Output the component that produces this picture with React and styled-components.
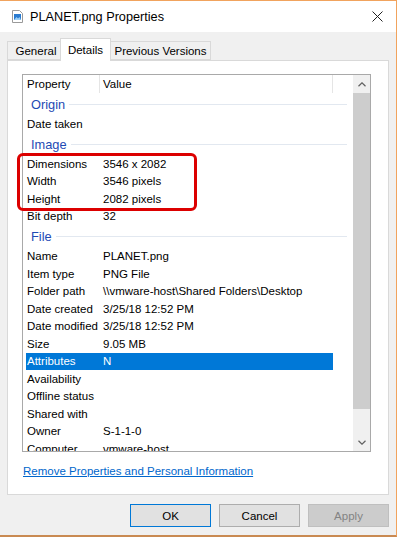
import React from "react";
import styled, { createGlobalStyle } from "styled-components";

const GlobalStyle = createGlobalStyle`
  body {
    margin: 0;
    background: #fff;
    font-family: "Segoe UI", "Liberation Sans", Arial, sans-serif;
  }
`;

const Window = styled.div`
  position: relative;
  width: 397px;
  height: 537px;
  box-sizing: border-box;
  border-top: 1px solid #f1a35d;
  border-right: 1px solid #f1a35d;
  border-bottom: 2px solid #c98a52;
  background: #f0f0f0;
  display: flex;
  flex-direction: column;
  color: #000;
  font-size: 11.5px;
`;

const TitleBar = styled.div`
  height: 31px;
  background: #fff;
  display: flex;
  align-items: center;
  padding-left: 12px;
  gap: 7px;
`;

const Title = styled.span`
  flex: 1;
  font-size: 12.7px;
  color: #000;
`;

const CloseBtn = styled.div`
  width: 46px;
  height: 31px;
  display: flex;
  align-items: center;
  justify-content: center;
  margin-right: -4px;
`;

const Body = styled.div`
  padding: 6px 0 0 7px;
  width: 382px;
`;

const TabRow = styled.div`
  height: 22px;
  display: flex;
  align-items: flex-end;
`;

const Tab = styled.div`
  position: relative;
  box-sizing: border-box;
  width: ${(p) => p.$w}px;
  height: ${(p) => (p.$active ? 23 : 19)}px;
  margin-bottom: ${(p) => (p.$active ? -1 : 0)}px;
  margin-left: -1px;
  border: 1px solid #d9d9d9;
  border-bottom: ${(p) => (p.$active ? "none" : "1px solid #d9d9d9")};
  background: ${(p) => (p.$active ? "#fff" : "#f0f0f0")};
  z-index: ${(p) => (p.$active ? 2 : 1)};
  display: flex;
  align-items: center;
  justify-content: center;
  padding-top: ${(p) => (p.$active ? 0 : 1)}px;
  font-size: 11.5px;
  &:first-child {
    margin-left: 0;
    padding-left: 4px;
  }
`;

const Panel = styled.div`
  position: relative;
  box-sizing: border-box;
  width: 382px;
  height: 435px;
  background: #fff;
  border: 1px solid #d9d9d9;
  padding: 13px 0 0 14px;
`;

const ListBox = styled.div`
  width: 349px;
  height: 378px;
  box-sizing: border-box;
  border: 1px solid #a9a9a9;
  display: flex;
`;

const Table = styled.div`
  width: 330px;
  overflow: hidden;
  padding-left: 3px;
  box-sizing: border-box;
`;

const Row = styled.div`
  display: grid;
  grid-template-columns: 74px 233px;
  width: 307px;
  height: 17.5px;
  align-items: center;
  background: ${(p) => (p.$selected ? "#0078d7" : "transparent")};
  color: ${(p) => (p.$selected ? "#fff" : "#000")};
  white-space: nowrap;
`;

const Cell = styled.div`
  box-sizing: border-box;
  height: 100%;
  display: flex;
  align-items: center;
  padding-left: ${(p) => (p.$second ? 3 : 1)}px;
  border-right: ${(p) => (p.$divider ? "1px solid #e5e5e5" : "none")};
  overflow: visible;
`;

const Group = styled.div`
  display: flex;
  align-items: flex-start;
  gap: 4px;
  width: 321px;
  height: 22.5px;
  box-sizing: border-box;
  padding: 4px 0 0 5px;
  font-size: 12.8px;
  color: #1e4ab4;
  line-height: 16px;
  &::after {
    content: "";
    flex: 1;
    height: 1px;
    margin-top: 7px;
    background: #e2e8f0;
  }
`;

const ScrollBar = styled.div`
  width: 17px;
  display: flex;
  flex-direction: column;
  background: #f0f0f0;
`;

const Arrow = styled.div`
  height: 18px;
  display: flex;
  align-items: center;
  justify-content: center;
`;

const Thumb = styled.div`
  height: 316px;
  background: #cdcdcd;
`;

const Track = styled.div`
  flex: 1;
`;

const Link = styled.a`
  display: inline-block;
  margin-top: 11px;
  margin-left: 1px;
  line-height: 16px;
  color: #0066cc;
  text-decoration: underline;
  font-size: 11.5px;
`;

const Footer = styled.div`
  width: 382px;
  display: flex;
  justify-content: flex-end;
  gap: 8px;
  padding-top: 9px;
`;

const Button = styled.div`
  width: 81px;
  height: 23px;
  box-sizing: border-box;
  display: flex;
  align-items: center;
  justify-content: center;
  font-size: 11.5px;
  background: ${(p) => (p.$disabled ? "#cccccc" : "#e1e1e1")};
  color: ${(p) => (p.$disabled ? "#838383" : "#000")};
  border: 1px solid
    ${(p) => (p.$default ? "#0078d7" : p.$disabled ? "#bfbfbf" : "#adadad")};
`;

const Highlight = styled.div`
  position: absolute;
  left: 17px;
  top: 152px;
  width: 180px;
  height: 58px;
  box-sizing: border-box;
  border: 3px solid #dc0000;
  border-radius: 6px;
  pointer-events: none;
`;

const sections = [
  { name: "Origin", rows: [["Date taken", ""]] },
  {
    name: "Image",
    rows: [
      ["Dimensions", "3546 x 2082"],
      ["Width", "3546 pixels"],
      ["Height", "2082 pixels"],
      ["Bit depth", "32"],
    ],
  },
  {
    name: "File",
    rows: [
      ["Name", "PLANET.png"],
      ["Item type", "PNG File"],
      ["Folder path", "\\\\vmware-host\\Shared Folders\\Desktop"],
      ["Date created", "3/25/18 12:52 PM"],
      ["Date modified", "3/25/18 12:52 PM"],
      ["Size", "9.05 MB"],
      ["Attributes", "N", true],
      ["Availability", ""],
      ["Offline status", ""],
      ["Shared with", ""],
      ["Owner", "S-1-1-0"],
      ["Computer", "vmware-host"],
    ],
  },
];

function FileIcon() {
  return (
    <svg width="11" height="13" viewBox="0 0 11 13">
      <path d="M0.5 0.5h7l3 3v9h-10z" fill="#fff" stroke="#9a9a9a" />
      <rect x="2" y="4" width="7" height="6" fill="#2a7bd0" />
      <path d="M2 10l2.5-3 1.5 1.5 1.5-1.5 1.5 3z" fill="#9fd0f5" />
    </svg>
  );
}

function Chevron({ down }) {
  return (
    <svg width="8" height="5" viewBox="0 0 8 5">
      <path
        d={down ? "M0.5 0.8l3.5 3.4 3.5-3.4" : "M0.5 4.2l3.5-3.4 3.5 3.4"}
        fill="none"
        stroke="#606060"
        strokeWidth="1.2"
      />
    </svg>
  );
}

export default function App() {
  return (
    <>
      <GlobalStyle />
      <Window>
        <TitleBar>
          <FileIcon />
          <Title>PLANET.png Properties</Title>
          <CloseBtn>
            <svg width="11" height="11" viewBox="0 0 11 11">
              <path d="M0.5 0.5l10 10M10.5 0.5l-10 10" stroke="#222" strokeWidth="1" />
            </svg>
          </CloseBtn>
        </TitleBar>
        <Body>
          <TabRow>
            <Tab $w={54}>General</Tab>
            <Tab $w={51} $active>
              Details
            </Tab>
            <Tab $w={101}>Previous Versions</Tab>
          </TabRow>
          <Panel>
            <ListBox>
              <Table>
                <Row>
                  <Cell $divider>Property</Cell>
                  <Cell $second $divider>
                    Value
                  </Cell>
                </Row>
                {sections.map((s) => (
                  <React.Fragment key={s.name}>
                    <Group>{s.name}</Group>
                    {s.rows.map(([k, v, sel]) => (
                      <Row key={k} $selected={sel}>
                        <Cell>{k}</Cell>
                        <Cell $second>{v}</Cell>
                      </Row>
                    ))}
                  </React.Fragment>
                ))}
              </Table>
              <ScrollBar>
                <Arrow>
                  <Chevron />
                </Arrow>
                <Thumb />
                <Track />
                <Arrow>
                  <Chevron down />
                </Arrow>
              </ScrollBar>
            </ListBox>
            <Link>Remove Properties and Personal Information</Link>
          </Panel>
          <Footer>
            <Button $default>OK</Button>
            <Button>Cancel</Button>
            <Button $disabled>Apply</Button>
          </Footer>
        </Body>
        <Highlight />
      </Window>
    </>
  );
}
